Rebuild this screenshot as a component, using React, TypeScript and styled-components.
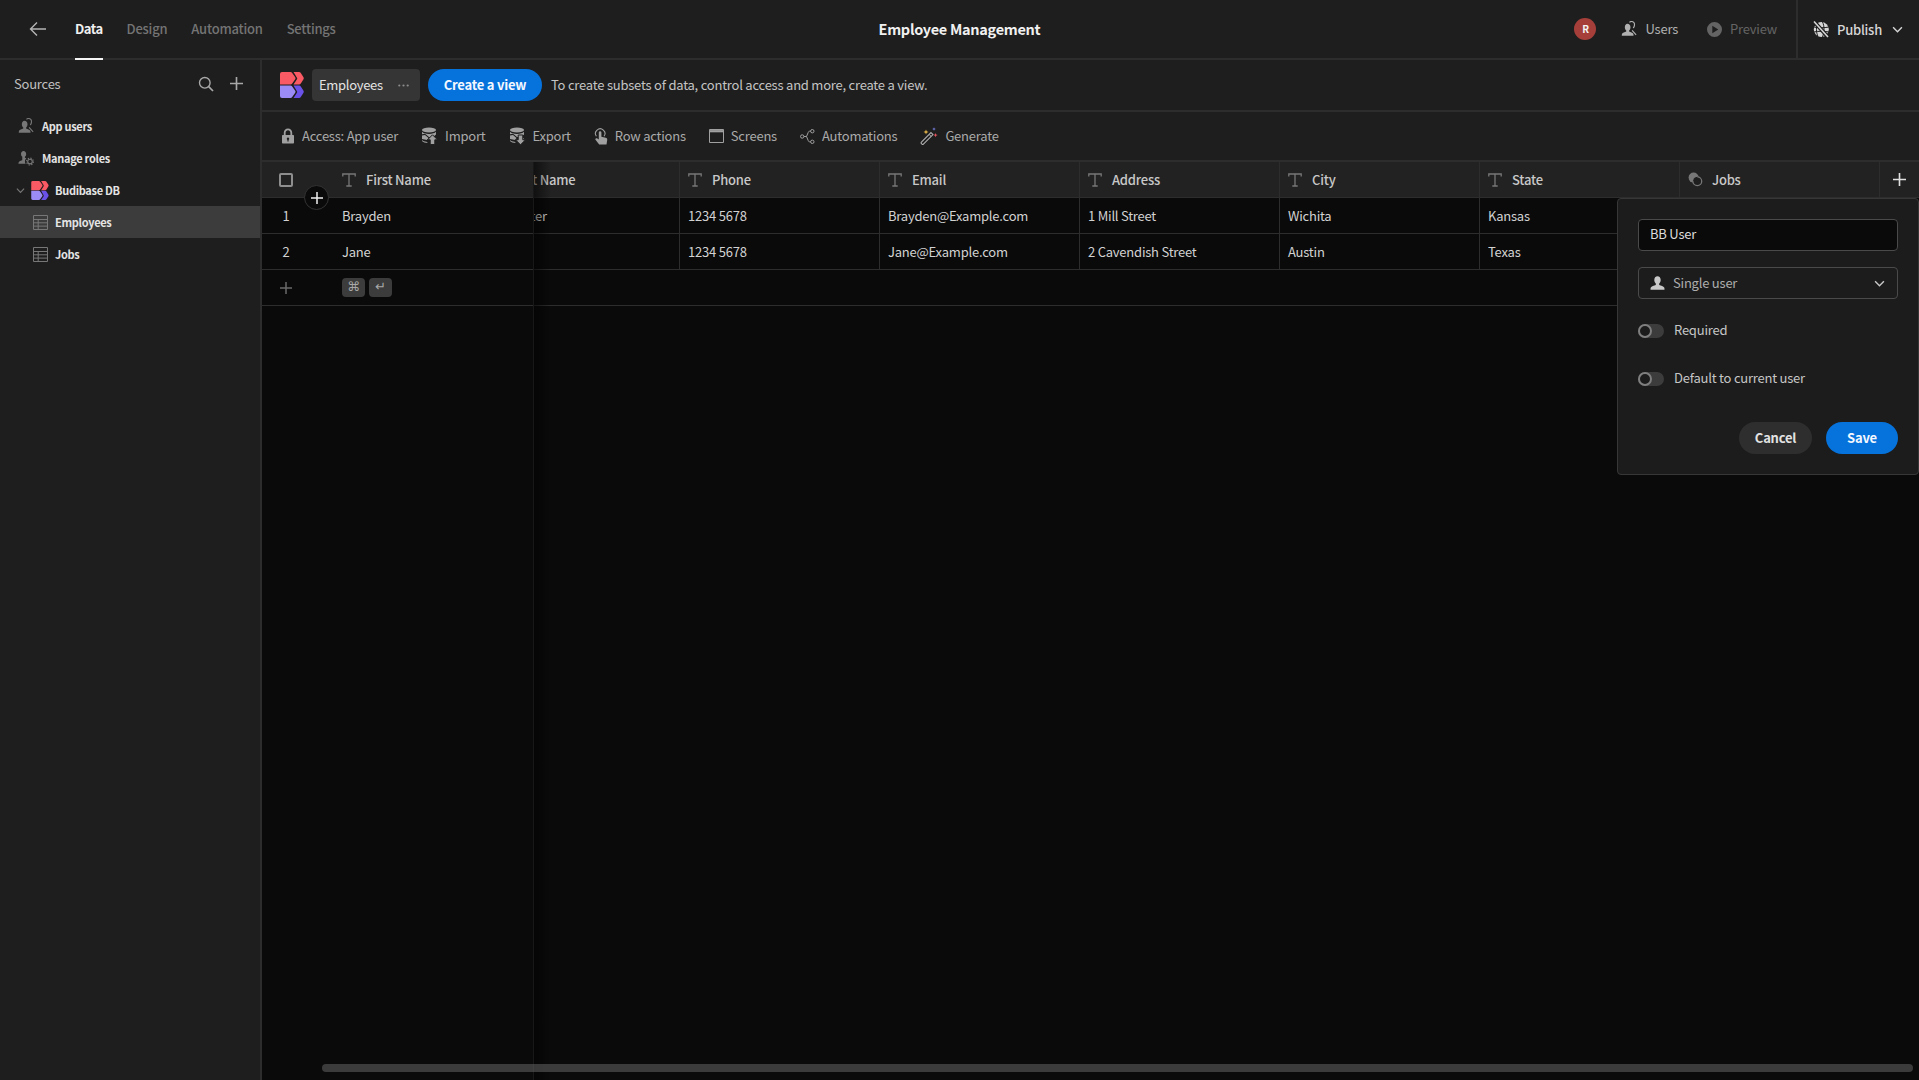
import React from 'react'
import styled, { createGlobalStyle } from 'styled-components'

const GlobalStyle = createGlobalStyle`
  html, body {
    margin: 0;
    padding: 0;
    height: 100%;
    background: #0a0a0a;
    overflow: hidden;
  }
  body {
    font-family: "Noto Sans CJK SC", "Noto Sans", sans-serif;
    font-size: 13px;
    letter-spacing: -0.22px;
    -webkit-font-smoothing: antialiased;
  }
  * {
    box-sizing: border-box;
  }
`

const line = '#2d2d2d'
const bar = '#1e1e1e'
const panel = '#1c1c1c'

function ArrowLeftIcon() {
  return (
    <svg width="18" height="16" viewBox="0 0 18 16" fill="none" stroke="currentColor" strokeWidth="1.4">
      <path d="M17 8H1.500M8 1.500 1.500 8 8 14.500" />
    </svg>
  )
}

function UserGroupIcon({ size = 16 }: { size?: number }) {
  return (
    <svg width={size} height={size} viewBox="0 0 18 18" fill="currentColor">
      <path d="M7.200 3.200c2.100 0 3.500 1.700 3.500 3.900 0 1.600-.7 3-1.600 3.700v1.100c1.700.5 4.100 1.300 4.700 2.500.3.700.3 1.600.3 2.100H.900c0-.5 0-1.400.3-2.100.6-1.200 3-2 4.700-2.500v-1.100c-.9-.7-1.600-2.100-1.600-3.700 0-2.200 1.400-3.900 2.900-3.900z" />
      <path d="M9.500 1.500c.7-.6 1.500-.9 2.300-.9 2 0 3.400 1.600 3.400 3.700 0 1.500-.6 2.800-1.500 3.500M12.500 10.500l4.500 5" fill="none" stroke="currentColor" strokeWidth="1.300" />
    </svg>
  )
}

function UserGearIcon() {
  return (
    <svg width="16" height="16" viewBox="0 0 18 18" fill="currentColor">
      <path d="M6.200 1c1.800 0 3 1.500 3 3.400 0 1.400-.6 2.600-1.400 3.200v1.200c.5.100 1 .3 1.500.5-.9.900-1.500 2.200-1.500 3.600 0 1 .3 1.900.8 2.700H.500c0-.5 0-1.300.3-1.900.5-1.100 2.600-1.800 4-2.200V7.600C4 7 3.400 5.800 3.400 4.400 3.400 2.500 4.500 1 6.200 1z" />
      <circle cx="13.500" cy="13" r="2.600" fill="none" stroke="currentColor" strokeWidth="1.300" />
      <circle cx="13.500" cy="13" r="3.900" fill="none" stroke="currentColor" strokeWidth="1.200" strokeDasharray="1.500 1.560" />
    </svg>
  )
}

function BudibaseLogo({ width, height }: { width: number; height: number }) {
  return (
    <svg width={width} height={height} viewBox="0 0 24 26">
      <path d="M0 2a2 2 0 0 1 2-2h8.500c.8 0 1.300.3 1.700.9l3 4.300c.5.700.5 1.400 0 2.100l-3 4.300c-.4.600-.9.900-1.700.9H0z" fill="#f95a63" />
      <path d="M13.500 0h5.500c.8 0 1.400.3 1.800.9l2.700 4.300c.4.700.4 1.400 0 2.100l-2.700 4.300c-.4.600-1 .9-1.800.9h-5.500l3.300-4.900c.5-.7.500-1.300 0-2.100z" fill="#f95a63" />
      <path d="M0 13.500h10.500c.8 0 1.300.3 1.700.9l3 4.300c.5.700.5 1.400 0 2.100l-3 4.300c-.4.600-.9.900-1.700.9H2a2 2 0 0 1-2-2z" fill="#9b8cf5" />
      <path d="M13.500 13.500h5.500c.8 0 1.400.3 1.800.9l2.700 4.300c.4.700.4 1.400 0 2.100l-2.700 4.300c-.4.600-1 .9-1.800.9h-5.500l3.300-4.900c.5-.7.500-1.300 0-2.100z" fill="#6a51e8" />
    </svg>
  )
}

function TableIcon() {
  return (
    <svg width="15" height="15" viewBox="0 0 15 15" fill="none" stroke="currentColor" strokeWidth="1">
      <path d="M.500.500h14v14H.500zM.500 4.500h14M.500 7.800h14M.500 11.100h14M5.200 4.500v10" />
    </svg>
  )
}

function ChevronIcon({ size = 10 }: { size?: number }) {
  return (
    <svg width={size} height={size} viewBox="0 0 10 10" fill="none" stroke="currentColor" strokeWidth="1.300">
      <path d="M1 3l4 4 4-4" />
    </svg>
  )
}

function SearchIcon() {
  return (
    <svg width="16" height="16" viewBox="0 0 16 16" fill="none" stroke="currentColor" strokeWidth="1.400">
      <circle cx="6.800" cy="6.800" r="5.300" />
      <path d="M10.700 10.700 15 15" strokeWidth="1.700" />
    </svg>
  )
}

function PlusIcon({ size = 12 }: { size?: number }) {
  return (
    <svg width={size} height={size} viewBox="0 0 12 12" fill="none" stroke="currentColor" strokeWidth="1.500">
      <path d="M6 0v12M0 6h12" />
    </svg>
  )
}

function DotsIcon() {
  return (
    <svg width="11" height="3" viewBox="0 0 11 3" fill="currentColor">
      <circle cx="1.300" cy="1.500" r="1.100" />
      <circle cx="5.500" cy="1.500" r="1.100" />
      <circle cx="9.700" cy="1.500" r="1.100" />
    </svg>
  )
}

function LockIcon() {
  return (
    <svg width="14" height="16" viewBox="0 0 14 16" fill="currentColor">
      <path fillRule="evenodd" d="M7 .500c2.400 0 4.200 1.800 4.200 4.200V7H12c.6 0 1 .4 1 1v6.500c0 .6-.4 1-1 1H2c-.6 0-1-.4-1-1V8c0-.6.4-1 1-1h.800V4.700C2.800 2.300 4.600.500 7 .500zm0 1.800c-1.300 0-2.400 1-2.400 2.400V7h4.800V4.700C9.400 3.300 8.300 2.300 7 2.300zM7 9.500a1.300 1.300 0 0 0-.600 2.400V13.500h1.200v-1.600A1.300 1.300 0 0 0 7 9.500z" />
    </svg>
  )
}

function DatabaseIcon({ dir }: { dir: 'up' | 'down' }) {
  return (
    <svg width="17" height="18" viewBox="0 0 17 18" fill="currentColor">
      <ellipse cx="8" cy="3" rx="7" ry="2.600" />
      <path d="M1 4.800c1.200 1.400 3.800 2.100 7 2.100s5.800-.7 7-2.100v2.700L12 10H8L4 6.800l-3 .4z" />
      <path d="M1 8.500 4 8l3.500 3-1.500 2-5-1zM15 10.800V12l-2.500 1z" />
      <path d="M1 13c1 1 2.500 1.500 4.500 1.800L7 16c-2.800 0-5-.8-6-2z" />
      {dir === 'up' ? (
        <path d="M11.500 7.800 16.500 12.800H13.800V17.500H9.200V12.800H6.500z" stroke={bar} strokeWidth="1" />
      ) : (
        <path d="M11.500 17.800 16.500 12.800H13.800V8H9.200V12.800H6.500z" stroke={bar} strokeWidth="1" />
      )}
    </svg>
  )
}

function PointerIcon() {
  return (
    <svg width="14" height="17" viewBox="0 0 14 17" fill="currentColor">
      <path d="M2.400 8.300A4.700 4.700 0 1 1 10 8.300" fill="none" stroke="currentColor" strokeWidth="1.100" />
      <path d="M4.800 4.500a1.300 1.300 0 0 1 2.600 0v4.300l4.300 1c1.100.3 1.700 1 1.500 2.100l-.7 4.600H5.200L1.500 11.700c-.7-.9.500-2 1.500-1.400l1.800 1.300z" />
    </svg>
  )
}

function WindowIcon() {
  return (
    <svg width="15" height="14" viewBox="0 0 15 14" fill="none" stroke="currentColor" strokeWidth="1">
      <path d="M.500.500h14v13H.500z" />
      <path d="M.500 2.200h14" strokeWidth="2.200" />
    </svg>
  )
}

function AutomationIcon() {
  return (
    <svg width="15" height="15" viewBox="0 0 15 15" fill="none" stroke="currentColor" strokeWidth="1">
      <circle cx="2.200" cy="7.500" r="1.700" />
      <circle cx="12.300" cy="2.200" r="1.700" />
      <circle cx="12.300" cy="12.800" r="1.700" />
      <path d="M3.900 7.500H6.500L8.200 3.500c.2-.6.600-1.300 1.300-1.300h1.100M6.500 7.500l1.700 4c.2.700.6 1.300 1.300 1.300h1.100" />
    </svg>
  )
}

function WandIcon() {
  return (
    <svg width="18" height="18" viewBox="0 0 18 18" fill="none">
      <path d="M11 5.600 13 7.600 3.400 17.200c-.4.400-1 .4-1.400 0l-.6-.6c-.4-.4-.4-1 0-1.400z" fill="none" stroke="#b0b0b0" strokeWidth="1.100" />
      <path d="M9.200 7.500 11.100 9.400" stroke="#b0b0b0" strokeWidth="1" />
      <path d="M6 2.500l.7 1.800 1.800.7-1.800.7L6 7.500l-.7-1.800L3.500 5l1.800-.7z" fill="#e6b545" />
      <path d="M14 .200l.5 1.300 1.300.5-1.300.5-.5 1.300-.5-1.300-1.300-.5 1.300-.5z" fill="#7b82e8" />
      <path d="M15.500 6l.6 1.500 1.600.6-1.600.6-.6 1.500-.6-1.500-1.500-.6 1.500-.6z" fill="#e2535c" />
    </svg>
  )
}

function TextTypeIcon() {
  return (
    <svg width="14" height="14" viewBox="0 0 14 14" fill="none" stroke="currentColor" strokeWidth="1.300">
      <path d="M.800 3.600V1h12.400v2.600M7 1v12M4.300 13h5.400" />
    </svg>
  )
}

function LinkTypeIcon() {
  return (
    <svg width="15" height="15" viewBox="0 0 15 15">
      <circle cx="5.600" cy="5.600" r="5" fill="currentColor" />
      <circle cx="9.300" cy="9.300" r="4.400" fill={bar} stroke="currentColor" strokeWidth="1.300" />
      <path d="M9.500 5.200a4 4 0 0 0-4 4" fill="none" stroke={bar} strokeWidth="1" />
    </svg>
  )
}

function PlayIcon() {
  return (
    <svg width="15" height="15" viewBox="0 0 15 15" fill="currentColor">
      <path fillRule="evenodd" d="M7.500 0a7.500 7.500 0 1 1 0 15 7.500 7.500 0 0 1 0-15zM5.300 3.800v7.400l6-3.700z" />
    </svg>
  )
}

function GlobeOffIcon() {
  return (
    <svg width="18" height="18" viewBox="0 0 18 18">
      <circle cx="9.300" cy="9.500" r="7.500" fill="currentColor" />
      <path d="M6 2.500c-2 4-2 10 0 14M10.500 2c2 4 2 10 0 15M2 7c4 1 10 1 15 0M2 12c4-1 10-1 15 0" fill="none" stroke={bar} strokeWidth="1" />
      <path d="M2 1.500 16 17" stroke={bar} strokeWidth="4" />
      <path d="M2 1.500 16 17" stroke="currentColor" strokeWidth="1.600" />
    </svg>
  )
}

function SingleUserIcon() {
  return (
    <svg width="15" height="15" viewBox="0 0 15 15" fill="currentColor">
      <path d="M7.500.200c2 0 3.200 1.600 3.200 3.700 0 1.500-.6 2.800-1.500 3.500v1.700c1.800.5 4.300 1.300 5 2.500.3.600.3 1.500.3 2.200H.500c0-.7 0-1.600.3-2.200.7-1.200 3.200-2 5-2.500V7.400C4.900 6.700 4.300 5.400 4.300 3.900 4.300 1.800 5.500.200 7.500.200z" />
    </svg>
  )
}

const columns = [
  { name: 'Last Name', key: 'last', link: false },
  { name: 'Phone', key: 'phone', link: false },
  { name: 'Email', key: 'email', link: false },
  { name: 'Address', key: 'address', link: false },
  { name: 'City', key: 'city', link: false },
  { name: 'State', key: 'state', link: false },
  { name: 'Jobs', key: 'jobs', link: true }
]

const rows: Record<string, string>[] = [
  {
    first: 'Brayden',
    last: 'Carpenter',
    phone: '1234 5678',
    email: 'Brayden@Example.com',
    address: '1 Mill Street',
    city: 'Wichita',
    state: 'Kansas',
    jobs: ''
  },
  {
    first: 'Jane',
    last: 'Doe',
    phone: '1234 5678',
    email: 'Jane@Example.com',
    address: '2 Cavendish Street',
    city: 'Austin',
    state: 'Texas',
    jobs: ''
  }
]

const toolbarItems = [
  { label: 'Import', icon: <DatabaseIcon dir="up" /> },
  { label: 'Export', icon: <DatabaseIcon dir="down" /> },
  { label: 'Row actions', icon: <PointerIcon /> },
  { label: 'Screens', icon: <WindowIcon /> },
  { label: 'Automations', icon: <AutomationIcon /> },
  { label: 'Generate', icon: <WandIcon /> }
]

function App() {
  return (
    <Page>
      <GlobalStyle />
      <TopBar>
        <TopLeft>
          <BackButton>
            <ArrowLeftIcon />
          </BackButton>
          <NavTab $active>Data</NavTab>
          <NavTab>Design</NavTab>
          <NavTab>Automation</NavTab>
          <NavTab>Settings</NavTab>
        </TopLeft>
        <AppTitle>Employee Management</AppTitle>
        <TopRight>
          <Avatar>R</Avatar>
          <TopAction>
            <UserGroupIcon />
            Users
          </TopAction>
          <TopAction $disabled>
            <PlayIcon />
            Preview
          </TopAction>
          <PublishButton>
            <GlobeOffIcon />
            Publish
            <ChevronIcon size={11} />
          </PublishButton>
        </TopRight>
      </TopBar>

      <Workspace>
        <Sidebar>
          <SidebarHeader>
            Sources
            <SidebarActions>
              <SearchIcon />
              <PlusIcon size={13} />
            </SidebarActions>
          </SidebarHeader>
          <SourceRow>
            <SourceIcon>
              <UserGroupIcon />
            </SourceIcon>
            App users
          </SourceRow>
          <SourceRow>
            <SourceIcon>
              <UserGearIcon />
            </SourceIcon>
            Manage roles
          </SourceRow>
          <SourceRow $indent={16} $gap={6}>
            <SourceIcon>
              <ChevronIcon size={9} />
            </SourceIcon>
            <BudibaseLogo width={18} height={19} />
            Budibase DB
          </SourceRow>
          <SourceRow $indent={33} $gap={7} $active>
            <SourceIcon>
              <TableIcon />
            </SourceIcon>
            Employees
          </SourceRow>
          <SourceRow $indent={33} $gap={7}>
            <SourceIcon>
              <TableIcon />
            </SourceIcon>
            Jobs
          </SourceRow>
        </Sidebar>

        <Main>
          <SubHeader>
            <BudibaseLogo width={24} height={26} />
            <TableTab>
              Employees
              <TabDots>
                <DotsIcon />
              </TabDots>
            </TableTab>
            <PrimaryButton>Create a view</PrimaryButton>
            <HintText>To create subsets of data, control access and more, create a view.</HintText>
          </SubHeader>

          <Toolbar>
            <ToolbarItem>
              <LockIcon />
              Access: App user
            </ToolbarItem>
            {toolbarItems.map(item => (
              <ToolbarItem key={item.label}>
                {item.icon}
                {item.label}
              </ToolbarItem>
            ))}
          </Toolbar>

          <Grid>
            <StickyColumn>
              <GridRow $header>
                <Gutter>
                  <Checkbox />
                </Gutter>
                <StickyCell>
                  <TypeIcon>
                    <TextTypeIcon />
                  </TypeIcon>
                  <HeaderLabel>First Name</HeaderLabel>
                </StickyCell>
              </GridRow>
              {rows.map((row, index) => (
                <GridRow key={row.first}>
                  <Gutter>{index + 1}</Gutter>
                  <StickyCell>{row.first}</StickyCell>
                </GridRow>
              ))}
              <GridRow>
                <Gutter $dim>
                  <PlusIcon size={12} />
                </Gutter>
                <StickyCell>
                  <Keycap>⌘</Keycap>
                  <Keycap>↵</Keycap>
                </StickyCell>
              </GridRow>
              <AddRowButton>
                <PlusIcon size={12} />
              </AddRowButton>
            </StickyColumn>

            <ScrollArea>
              <Track>
                <GridRow $header>
                  {columns.map(col => (
                    <Cell key={col.key}>
                      <TypeIcon>{col.link ? <LinkTypeIcon /> : <TextTypeIcon />}</TypeIcon>
                      <HeaderLabel>{col.name}</HeaderLabel>
                    </Cell>
                  ))}
                  <AddColumn>
                    <PlusIcon size={13} />
                  </AddColumn>
                </GridRow>
                {rows.map(row => (
                  <GridRow key={row.email}>
                    {columns.map(col => (
                      <Cell key={col.key}>{row[col.key]}</Cell>
                    ))}
                  </GridRow>
                ))}
                <GridRow />
              </Track>
            </ScrollArea>

            <Popover>
              <TextInput>BB User</TextInput>
              <SelectBox>
                <SingleUserIcon />
                <SelectLabel>Single user</SelectLabel>
                <ChevronIcon size={11} />
              </SelectBox>
              <ToggleRow>
                <ToggleTrack>
                  <ToggleKnob />
                </ToggleTrack>
                <ToggleLabel>Required</ToggleLabel>
              </ToggleRow>
              <ToggleRow>
                <ToggleTrack>
                  <ToggleKnob />
                </ToggleTrack>
                <ToggleLabel>Default to current user</ToggleLabel>
              </ToggleRow>
              <PopoverActions>
                <SecondaryButton>Cancel</SecondaryButton>
                <SaveButton>Save</SaveButton>
              </PopoverActions>
            </Popover>

            <ScrollThumb />
          </Grid>
        </Main>
      </Workspace>
    </Page>
  )
}

const Page = styled.div`
  width: 100vw;
  height: 100vh;
  display: flex;
  flex-direction: column;
  overflow: hidden;
  background: #0a0a0a;
`

const TopBar = styled.header`
  height: 60px;
  flex-shrink: 0;
  display: grid;
  grid-template-columns: 1fr auto 1fr;
  align-items: center;
  background: ${bar};
  border-bottom: 2px solid ${line};
`

const TopLeft = styled.nav`
  display: flex;
  align-items: center;
  gap: 24px;
  height: 58px;
  padding-left: 29px;
`

const BackButton = styled.div`
  display: flex;
  color: #b4b4b4;
  margin-right: 4px;
`

const NavTab = styled.div<{ $active?: boolean }>`
  height: 60px;
  padding-top: 1px;
  line-height: 56px;
  font-weight: ${({ $active }) => ($active ? 600 : 500)};
  letter-spacing: ${({ $active }) => ($active ? '-0.5px' : '-0.22px')};
  color: ${({ $active }) => ($active ? '#f0f0f0' : '#747474')};
  border-bottom: 2px solid ${({ $active }) => ($active ? '#f5f5f5' : 'transparent')};
  align-self: flex-start;
`

const AppTitle = styled.div`
  font-size: 14.5px;
  letter-spacing: -0.3px;
  font-weight: 600;
  line-height: 20px;
  color: #f0f0f0;
`

const TopRight = styled.div`
  display: flex;
  align-items: center;
  justify-content: flex-end;
  height: 58px;
`

const Avatar = styled.div`
  width: 22px;
  height: 22px;
  border-radius: 50%;
  background: #a63f3a;
  color: #f4f4f4;
  font-size: 10px;
  font-weight: 700;
  line-height: 22px;
  text-align: center;
  margin-right: 25px;
`

const TopAction = styled.div<{ $disabled?: boolean }>`
  display: flex;
  align-items: center;
  gap: 8px;
  line-height: 20px;
  color: ${({ $disabled }) => ($disabled ? '#646464' : '#b0b0b0')};
  margin-right: ${({ $disabled }) => ($disabled ? '19px' : '29px')};
`

const PublishButton = styled.div`
  height: 58px;
  display: flex;
  align-items: center;
  gap: 7px;
  padding: 0 16px 0 14px;
  border-left: 2px solid ${line};
  color: #d6d6d6;
  font-weight: 500;
  svg:last-child {
    margin-left: 3px;
  }
`

const Workspace = styled.div`
  flex: 1;
  display: flex;
  min-height: 0;
`

const Sidebar = styled.aside`
  width: 262px;
  flex-shrink: 0;
  background: ${bar};
  border-right: 2px solid ${line};
`

const SidebarHeader = styled.div`
  height: 50px;
  display: flex;
  align-items: center;
  justify-content: space-between;
  padding: 0 17px 3px 14px;
  color: #c0c0c0;
`

const SidebarActions = styled.div`
  display: flex;
  align-items: center;
  gap: 16px;
  color: #a8a8a8;
`

const SourceRow = styled.div<{ $active?: boolean; $indent?: number; $gap?: number }>`
  height: 32px;
  display: flex;
  align-items: center;
  gap: ${({ $gap }) => $gap ?? 8}px;
  padding-left: ${({ $indent }) => $indent ?? 18}px;
  font-size: 11px;
  letter-spacing: -0.3px;
  font-weight: 600;
  color: #e4e4e4;
  background: ${({ $active }) => ($active ? '#3c3c3c' : 'transparent')};
`

const SourceIcon = styled.span`
  display: flex;
  color: #777;
`

const Main = styled.main`
  flex: 1;
  min-width: 0;
  display: flex;
  flex-direction: column;
`

const SubHeader = styled.div`
  height: 52px;
  flex-shrink: 0;
  display: flex;
  align-items: center;
  padding-left: 18px;
  background: ${bar};
  border-bottom: 2px solid ${line};
`

const TableTab = styled.div`
  width: 108px;
  height: 32px;
  margin-left: 8px;
  padding: 0 11px 0 7px;
  display: flex;
  align-items: center;
  justify-content: space-between;
  border-radius: 4px;
  background: #353535;
  color: #e4e4e4;
  line-height: 20px;
  letter-spacing: -0.3px;
`

const TabDots = styled.span`
  display: flex;
  color: #8c8c8c;
`

const PrimaryButton = styled.div`
  width: 114px;
  height: 32px;
  margin: 0 9px 0 8px;
  border-radius: 16px;
  background: #0672dc;
  color: #f4f8ff;
  font-weight: 600;
  line-height: 31px;
  text-align: center;
`

const HintText = styled.div`
  color: #c4c4c4;
  line-height: 20px;
`

const Toolbar = styled.div`
  height: 50px;
  flex-shrink: 0;
  display: flex;
  align-items: center;
  gap: 23px;
  padding-left: 19px;
  background: ${bar};
  border-bottom: 2px solid ${line};
`

const ToolbarItem = styled.div`
  display: flex;
  align-items: center;
  gap: 7px;
  color: #aaa;
  line-height: 20px;
  svg {
    color: #a0a0a0;
  }
`

const Grid = styled.div`
  flex: 1;
  min-height: 0;
  display: flex;
  position: relative;
  background: #0a0a0a;
`

const StickyColumn = styled.div`
  width: 272px;
  flex-shrink: 0;
  position: relative;
  z-index: 2;
  background: #0a0a0a;
  border-right: 1px solid #333;
  &::after {
    content: '';
    position: absolute;
    top: 0;
    bottom: 0;
    left: 100%;
    width: 18px;
    background: linear-gradient(to right, rgba(0, 0, 0, 0.55), transparent);
    pointer-events: none;
  }
`

const GridRow = styled.div<{ $header?: boolean }>`
  height: 36px;
  display: flex;
  border-bottom: 1px solid ${line};
  background: ${({ $header }) => ($header ? '#222' : '#0a0a0a')};
  color: ${({ $header }) => ($header ? '#c8c8c8' : '#d2d2d2')};
  line-height: 20px;
`

const Gutter = styled.div<{ $dim?: boolean }>`
  width: 48px;
  flex-shrink: 0;
  margin-right: 24px;
  display: flex;
  align-items: center;
  justify-content: center;
  color: ${({ $dim }) => ($dim ? '#6a6a6a' : '#d2d2d2')};
`

const StickyCell = styled.div`
  flex: 1;
  display: flex;
  align-items: center;
  padding-left: 8px;
`

const Cell = styled.div`
  width: 200px;
  flex-shrink: 0;
  display: flex;
  align-items: center;
  padding-left: 8px;
  border-right: 1px solid ${line};
  white-space: nowrap;
`

const TypeIcon = styled.span`
  display: flex;
  width: 24px;
  flex-shrink: 0;
  color: #777;
`

const HeaderLabel = styled.span`
  font-weight: 500;
  margin-top: 1px;
`

const Checkbox = styled.span`
  width: 14px;
  height: 14px;
  border: 2px solid #8e8e8e;
  border-radius: 2px;
  flex-shrink: 0;
`

const Keycap = styled.span`
  width: 23px;
  height: 19px;
  border-radius: 4px;
  background: #3c3c3c;
  color: #a8a8a8;
  font-family: "DejaVu Sans", sans-serif;
  font-size: 13px;
  line-height: 18px;
  text-align: center;
  & + & {
    margin-left: 4px;
  }
`

const AddRowButton = styled.div`
  position: absolute;
  left: 42px;
  top: 23px;
  width: 25px;
  height: 25px;
  display: flex;
  align-items: center;
  justify-content: center;
  border-radius: 50%;
  background: #0a0a0a;
  border: 1px solid #333;
  color: #f0f0f0;
`

const ScrollArea = styled.div`
  flex: 1;
  min-width: 0;
  overflow: hidden;
`

const Track = styled.div`
  width: 1440px;
  margin-left: -54px;
`

const AddColumn = styled.div`
  width: 40px;
  padding-right: 2px;
  display: flex;
  align-items: center;
  justify-content: center;
  color: #e0e0e0;
`

const Popover = styled.div`
  position: absolute;
  top: 36px;
  right: 0;
  z-index: 3;
  width: 302px;
  height: 277px;
  padding: 20px 20px 0;
  display: flex;
  flex-direction: column;
  background: ${panel};
  border: 1px solid #373737;
  border-radius: 4px;
`

const TextInput = styled.div`
  height: 32px;
  padding-left: 11px;
  border: 1px solid #4a4a4a;
  border-radius: 4px;
  background: #0a0a0a;
  color: #dcdcdc;
  line-height: 28px;
`

const SelectBox = styled.div`
  height: 32px;
  margin-top: 16px;
  padding: 0 12px 0 11px;
  display: flex;
  align-items: center;
  gap: 8px;
  border: 1px solid #4a4a4a;
  border-radius: 4px;
  color: #c0c0c0;
  line-height: 20px;
  svg {
    color: #c8c8c8;
  }
`

const SelectLabel = styled.span`
  flex: 1;
  color: #adadad;
`

const ToggleRow = styled.div`
  height: 32px;
  margin-top: 16px;
  display: flex;
  align-items: center;
  gap: 10px;
  color: #c6c6c6;
  line-height: 20px;
`

const ToggleLabel = styled.span`
  margin-top: -2px;
`

const ToggleTrack = styled.span`
  width: 26px;
  height: 14px;
  border-radius: 7px;
  background: #3c3c3c;
  display: flex;
`

const ToggleKnob = styled.span`
  width: 14px;
  height: 14px;
  border-radius: 50%;
  background: ${panel};
  border: 2px solid #7f7f7f;
`

const PopoverActions = styled.div`
  margin-top: 27px;
  display: flex;
  justify-content: flex-end;
  gap: 14px;
`

const SecondaryButton = styled.div`
  width: 73px;
  height: 32px;
  border-radius: 16px;
  background: #2e2e2e;
  color: #e2e2e2;
  font-weight: 600;
  line-height: 31px;
  text-align: center;
`

const SaveButton = styled(SecondaryButton)`
  width: 72px;
  background: #0672dc;
  color: #f4f8ff;
`

const ScrollThumb = styled.div`
  position: absolute;
  z-index: 3;
  left: 60px;
  right: 6px;
  bottom: 8px;
  height: 8px;
  border-radius: 4px;
  background: rgba(90, 90, 90, 0.62);
`

export default App
